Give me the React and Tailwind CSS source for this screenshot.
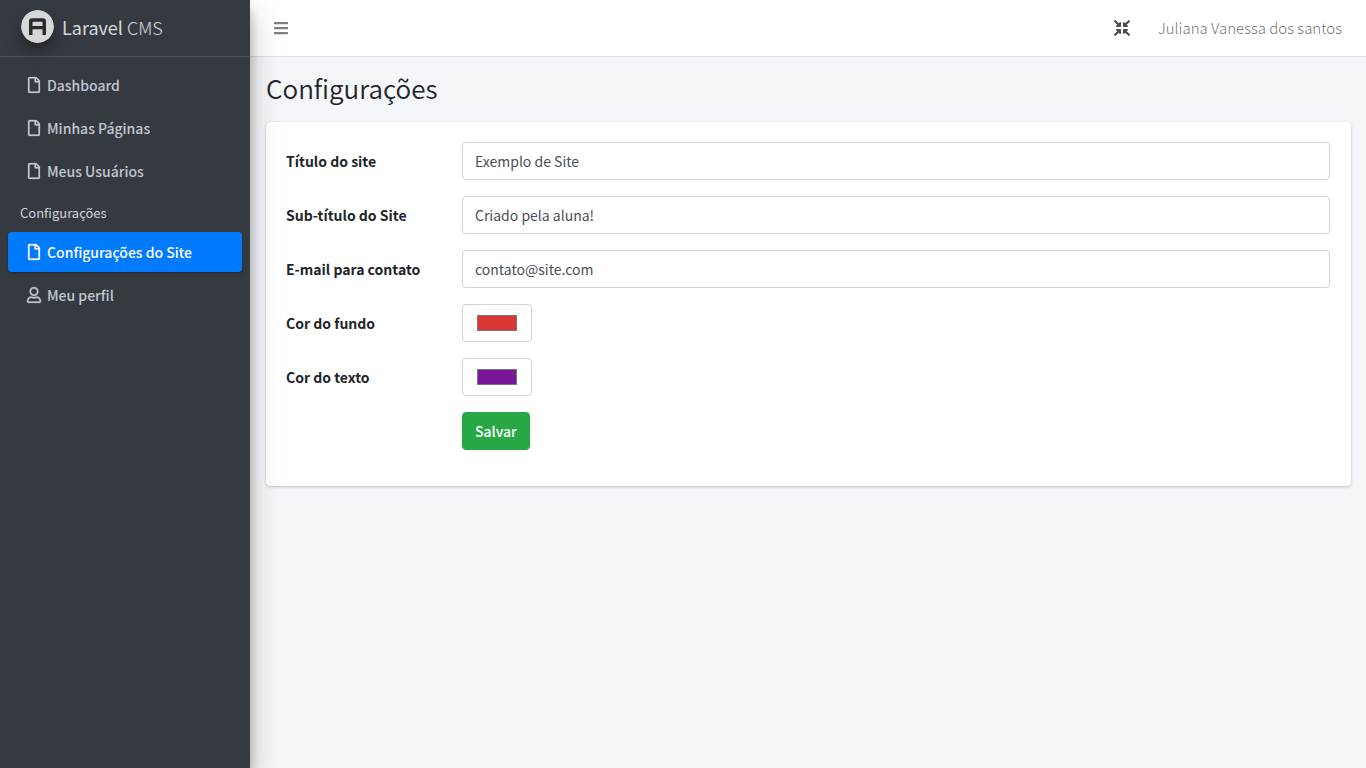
import { FaBars, FaRegFile, FaRegUser, FaCompressArrowsAlt } from "react-icons/fa";

function Logo() {
  return (
    <svg
      viewBox="0 0 33 33"
      className="size-[33px] shrink-0 rounded-full opacity-80 shadow-[0_10px_20px_rgba(0,0,0,0.19),0_6px_6px_rgba(0,0,0,0.23)]"
      aria-hidden="true"
    >
      <circle cx="16.5" cy="16.5" r="16.5" fill="#ffffff" />
      <path
        fillRule="evenodd"
        fill="#252a2e"
        d="M11 8.300h11a3 3 0 0 1 3 3V25h-3.500v-5.700h-10V25H8V11.300A3 3 0 0 1 11 8.300ZM12.300 11.700a.8.8 0 0 0-.8.8v3.500h10v-3.500a.8.8 0 0 0-.8-.8Z"
      />
    </svg>
  );
}

function NavItem({ icon: Icon, active, children }) {
  return (
    <li>
      <a
        href="#"
        aria-current={active ? "page" : undefined}
        className={
          active
            ? "flex h-10 items-center gap-[3px] rounded bg-[#007bff] px-4 font-medium text-white shadow-[0_1px_3px_rgba(0,0,0,0.12),0_1px_2px_rgba(0,0,0,0.24)]"
            : "flex h-10 items-center gap-[3px] rounded px-4 font-medium text-[#c2c7d0]"
        }
      >
        <span className="flex w-5 justify-center">
          <Icon className="size-4 overflow-visible stroke-current [stroke-width:8px]" aria-hidden="true" />
        </span>
        {children}
      </a>
    </li>
  );
}

const rowClass = "grid grid-cols-[161px_1fr] items-center gap-x-[15px]";

function Field({ id, label, ...props }) {
  return (
    <div className={rowClass}>
      <label htmlFor={id} className="font-bold">
        {label}
      </label>
      <input
        id={id}
        className="h-[38px] w-full rounded border border-[#ced4da] bg-white px-3 text-[#495057]"
        {...props}
      />
    </div>
  );
}

function ColorField({ id, label, value }) {
  return (
    <div className={rowClass}>
      <label htmlFor={id} className="font-bold">
        {label}
      </label>
      <input
        id={id}
        type="color"
        defaultValue={value}
        className="h-[38px] w-[70px] rounded border border-[#ced4da] bg-white px-3 py-1.5"
      />
    </div>
  );
}

export default function App() {
  return (
    <div className="flex min-h-screen bg-[#f4f6f9] font-['Noto_Sans_CJK_JP','Noto_Sans',sans-serif] text-[14px] leading-6 text-[#212529]">
      <aside className="z-10 w-[250px] shrink-0 bg-[#343a40] shadow-[0_14px_28px_rgba(0,0,0,0.25),0_10px_10px_rgba(0,0,0,0.22)]">
        <a
          href="#"
          className="flex h-[57px] items-center gap-2 border-b border-[#4b545c] pb-[3px] pl-[21px] text-[18px] text-white/80"
        >
          <Logo />
          <span className="font-light">
            <b className="font-normal">Laravel</b> CMS
          </span>
        </a>
        <nav className="p-2">
          <ul className="flex flex-col gap-[3px]">
            <NavItem icon={FaRegFile}>Dashboard</NavItem>
            <NavItem icon={FaRegFile}>Minhas Páginas</NavItem>
            <NavItem icon={FaRegFile}>Meus Usuários</NavItem>
            <li className="flex h-[35px] items-center px-3 pt-0.5 text-[13px] text-[#d0d4db]">Configurações</li>
            <NavItem icon={FaRegFile} active>
              Configurações do Site
            </NavItem>
            <NavItem icon={FaRegUser}>Meu perfil</NavItem>
          </ul>
        </nav>
      </aside>

      <div className="flex min-w-0 flex-1 flex-col">
        <header className="flex h-[57px] items-center justify-between border-b border-[#dee2e6] bg-white pr-6 pl-[23px] text-black/50">
          <button type="button" aria-label="Menu">
            <FaBars className="size-4" aria-hidden="true" />
          </button>
          <div className="flex items-center gap-7">
            <button type="button" aria-label="Tela cheia" className="text-black/70">
              <FaCompressArrowsAlt className="size-4" aria-hidden="true" />
            </button>
            <a href="#" className="text-[15px] font-light text-black/60">
              Juliana Vanessa dos santos
            </a>
          </div>
        </header>

        <main className="py-[15px] pr-[15px] pl-4">
          <h1 className="mb-[18px] text-[26px] leading-8 font-[350]">Configurações</h1>
          <form
            className="flex flex-col gap-4 rounded bg-white pt-5 pr-[21px] pb-9 pl-5 shadow-[0_0_1px_rgba(0,0,0,0.125),0_1px_3px_rgba(0,0,0,0.2)]"
            onSubmit={(event) => event.preventDefault()}
          >
            <Field id="title" label="Título do site" type="text" defaultValue="Exemplo de Site" />
            <Field id="subtitle" label="Sub-título do Site" type="text" defaultValue="Criado pela aluna!" />
            <Field id="email" label="E-mail para contato" type="email" defaultValue="contato@site.com" />
            <ColorField id="bgcolor" label="Cor do fundo" value="#d93636" />
            <ColorField id="textcolor" label="Cor do texto" value="#7a1799" />
            <div className={rowClass}>
              <button
                type="submit"
                className="col-start-2 h-[38px] justify-self-start rounded border border-[#28a745] bg-[#28a745] px-3 font-medium text-white"
              >
                Salvar
              </button>
            </div>
          </form>
        </main>
      </div>
    </div>
  );
}
